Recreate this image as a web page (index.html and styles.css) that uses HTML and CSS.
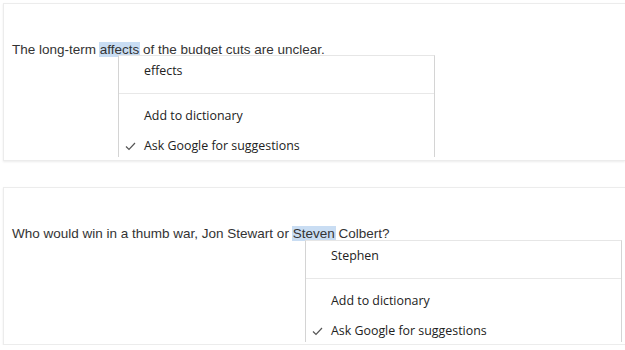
FILE: index.html
```html
<!DOCTYPE html>
<html lang="en">
<head>
    <meta charset="UTF-8">
    <meta name="viewport" content="width=device-width, initial-scale=1.0">
    <title>Spell check suggestions</title>
    <link rel="stylesheet" href="styles.css">
</head>
<body>

    <!-- Ejemplo 1: palabra mal usada -->
    <section class="panel">
        <p class="sentence">The long-term <span class="misspelled">affects</span> of the budget cuts are unclear.</p>
        <div class="menu menu-first">
            <div class="menu-item">effects</div>
            <div class="menu-separator"></div>
            <div class="menu-item">Add to dictionary</div>
            <div class="menu-item">
                <svg class="check" width="11" height="9" viewBox="0 0 11 9"><polyline points="1,4.5 4,7.5 10,1" fill="none" stroke="#555" stroke-width="1.2"/></svg>
                Ask Google for suggestions
            </div>
        </div>
    </section>

    <!-- Ejemplo 2: nombre propio -->
    <section class="panel">
        <p class="sentence">Who would win in a thumb war, Jon Stewart or <span class="misspelled">Steven</span> Colbert?</p>
        <div class="menu menu-second">
            <div class="menu-item">Stephen</div>
            <div class="menu-separator"></div>
            <div class="menu-item">Add to dictionary</div>
            <div class="menu-item">
                <svg class="check" width="11" height="9" viewBox="0 0 11 9"><polyline points="1,4.5 4,7.5 10,1" fill="none" stroke="#555" stroke-width="1.2"/></svg>
                Ask Google for suggestions
            </div>
        </div>
    </section>

</body>
</html>
```

FILE: styles.css
```css
body {
    margin: 0;
    padding: 3px 0 0 3px;
    background-color: #ffffff;
    font-family: "Liberation Sans", Arial, sans-serif;
}

.panel {
    position: relative;
    box-sizing: border-box;
    height: 158px;
    margin-bottom: 26px;
    border: 1px solid #ececec;
    border-right: none;
    box-shadow: 0 1px 2px rgba(0, 0, 0, 0.08);
    overflow: hidden;
}

.panel:last-child {
    margin-bottom: 0;
}

.sentence {
    margin: 37px 0 0 8px;
    font-size: 13.5px;
    line-height: 17px;
    color: #333333;
}

.misspelled {
    background-color: #c9ddf3;
    padding: 0 1px;
    margin: 0 -1px;
}

.menu {
    position: absolute;
    top: 51px;
    box-sizing: border-box;
    width: 317px;
    height: 102px;
    background-color: #ffffff;
    border: 1px solid #d4d4d4;
    border-top-color: #e6e6e6;
    border-bottom: none;
    font-family: "Open Sans", "Noto Sans", sans-serif;
    font-size: 12.4px;
    color: #222222;
}

.menu-first {
    left: 114px;
}

.menu-second {
    left: 301px;
    top: 52px;
}

.menu-item {
    position: relative;
    height: 30px;
    line-height: 30px;
    padding-left: 25px;
}

.menu-separator {
    height: 1px;
    margin: 7px 0;
    background-color: #e8e8e8;
}

.check {
    position: absolute;
    left: 6px;
    top: 11px;
}
```
